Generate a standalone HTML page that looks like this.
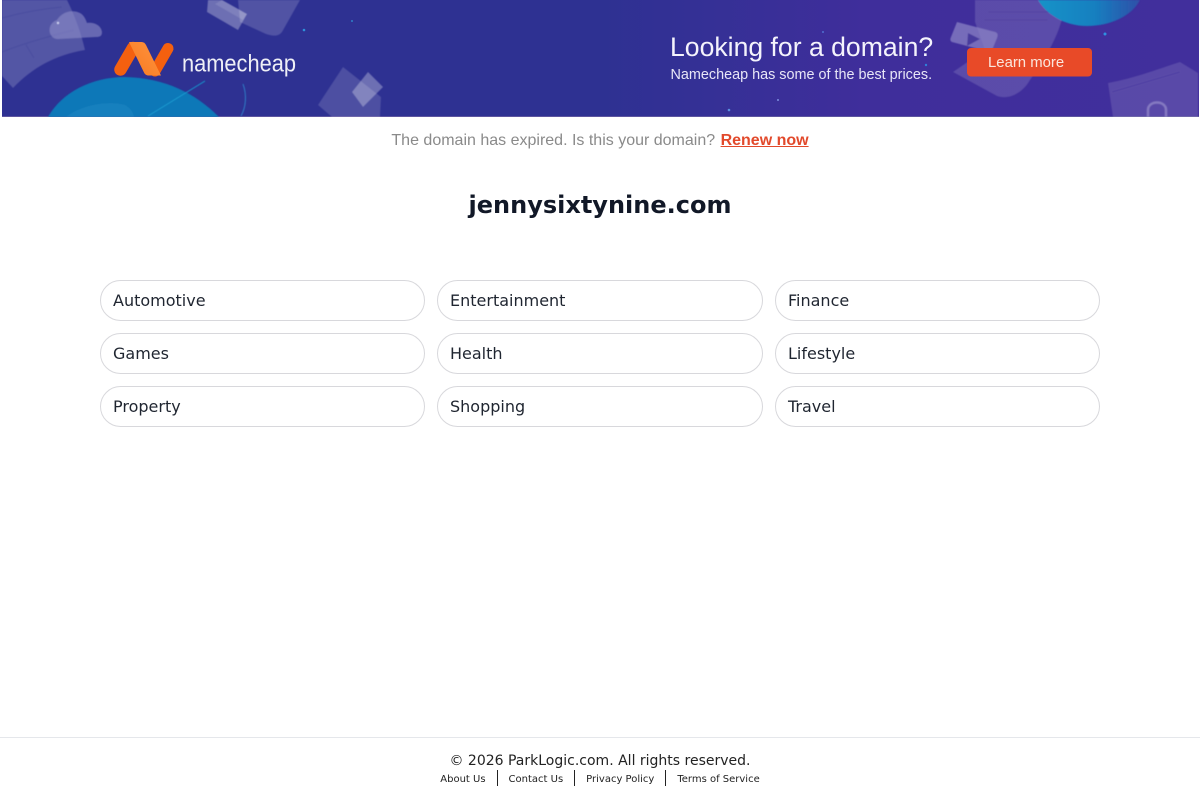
<!DOCTYPE html>
<html lang="en">
<head>
<meta charset="utf-8">
<title>jennysixtynine.com</title>
<style>
html,body{margin:0;padding:0;background:#fff}
body{width:1200px;height:800px;position:relative;overflow:hidden;font-family:"DejaVu Sans",sans-serif;color:#111827}
.banner{position:absolute;left:2px;top:0;width:1197px;height:117px;overflow:hidden}
.banner svg{position:absolute;left:-2px;top:0}
.notice{position:absolute;left:0;top:131px;width:1200px;text-align:center;font:16px/20px "Liberation Sans",sans-serif;color:#8a8a8a}
.notice a{color:#e2492b;font-weight:bold;text-decoration:underline;margin-left:1px}
h1{position:absolute;left:0;top:189px;width:1200px;margin:0;text-align:center;font:bold 24px/32px "DejaVu Sans",sans-serif;color:#111827}
.pill{position:absolute;box-sizing:border-box;height:41px;border:1px solid #d8d8dc;border-radius:20.5px;padding-left:12px;font-size:16px;line-height:39px;color:#1f2530;background:#fff}
.c1{left:100px;width:325px}.c2{left:437px;width:326px}.c3{left:775px;width:325px}
.r1{top:280px}.r2{top:333px}.r3{top:386px}
.footer{position:absolute;left:0;top:737px;width:1200px;height:63px;border-top:1px solid #e5e7eb}
.copy{position:absolute;left:0;top:14px;width:1200px;text-align:center;font-size:14px;line-height:18px;color:#222}
.links{position:absolute;left:0;top:32px;width:1200px;text-align:center;font-size:10px;color:#222;white-space:nowrap}
.links a{color:#222;text-decoration:none;display:inline-block;vertical-align:top;padding:0 11px;height:16px;line-height:19px}
.links a+a{border-left:1px solid #222}
</style>
</head>
<body>
<div class="banner">
<svg width="1200" height="117" viewBox="0 0 1200 117">
<defs>
<linearGradient id="bg" x1="0" y1="0" x2="1" y2="0">
<stop offset="0" stop-color="#2e3192"/>
<stop offset=".5" stop-color="#2e3192"/>
<stop offset=".72" stop-color="#3f2e9b"/>
<stop offset="1" stop-color="#412f9c"/>
</linearGradient>
<linearGradient id="orange" x1="0" y1="1" x2="1" y2="0">
<stop offset="0" stop-color="#f87a20"/>
<stop offset="1" stop-color="#ff9440"/>
</linearGradient>
<linearGradient id="globe" x1="0" y1="0" x2="1" y2="0">
<stop offset="0" stop-color="#1593c8"/>
<stop offset=".55" stop-color="#1680c0"/>
<stop offset="1" stop-color="#2f4fa8"/>
</linearGradient>
<filter id="soft"><feGaussianBlur stdDeviation=".5"/></filter>
</defs>
<rect width="1200" height="117" fill="url(#bg)"/>
<rect y="116" width="1200" height="1" fill="#5d559f"/>

<g filter="url(#soft)">
<!-- left fan -->
<path d="M2 0H67C75 16 81 33 85 50 55 55 32 68 13 88L2 76Z" fill="#fff" opacity=".18"/>
<path d="M2 18C20 13 40 9 62 7M2 52C22 44 42 38 74 30M26 45 34 58" stroke="#2e3192" stroke-opacity=".16" stroke-width="2" fill="none"/>
<!-- cloud -->
<path d="M58 39C48 39 46 24 57 20 62 12 72 9 80 13 84 15 86 20 87 23 92 22 101 24 102 32 102 36 100 37 96 37Z" fill="#8d8ec8" opacity=".6"/>
<circle cx="58" cy="23" r="1.2" fill="#cfd2f0"/>

<!-- top centre papers -->
<path d="M238 0H300L282 32C278 37 272 36 266 34L240 22Z" fill="#fff" opacity=".17"/>
<path d="M208 0 207 12 238 30 247 14 222 0Z" fill="#fff" opacity=".3"/>
<path d="M222 0 247 14 243 20 215 4Z" fill="#fff" opacity=".12"/>

<!-- globe -->
<path d="M48 117C62 92 92 77 125 77 165 78 195 93 219 117Z" fill="#0f78b8"/>
<path d="M66 117C80 106 106 100 125 105 130 108 133 112 134 117Z" fill="#1f86c2" opacity=".6"/>
<path d="M148 116 205 81" stroke="#1a9ad0" stroke-width="1" fill="none"/>
<path d="M243 84C247 95 246 107 241 116" stroke="#2f7fc8" stroke-width="1" fill="none"/>

<!-- lower doc cluster -->
<path d="M343 67 381 97 380 117H332L318 105Z" fill="#fff" opacity=".15"/>
<path d="M368 72 383 87 363 107 352 92Z" fill="#fff" opacity=".3"/>

<!-- right shapes -->
<path d="M975 0H1065C1064 26 1050 52 1030 80 1022 94 1008 100 997 96L953 72 985 50 975 22Z" fill="#fff" opacity=".14"/>
<path d="M988 12 1050 12M984 20 1048 20" stroke="#412f9c" stroke-opacity=".22" stroke-width="2"/>
<path d="M957 22 995 32C998 33 998 35 997 38L992 50C990 52 989 52 986 51L952 42C950 41 950 39 951 37Z" fill="#8a82c4" opacity=".75"/>
<path d="M968 33 980 39 967 46Z" fill="#3c3196" opacity=".8"/>
<path d="M1038 0H1140C1132 16 1110 26 1087 26 1064 26 1046 14 1038 0Z" fill="url(#globe)"/>
<path d="M1108 83C1135 78 1155 70 1180 62L1198 73V117H1113Z" fill="#fff" opacity=".13"/>
<path d="M1112 92 1180 72" stroke="#412f9c" stroke-opacity=".3" stroke-width="2"/>
<path d="M1148 117V110C1148 100 1166 100 1166 110V117" stroke="#a9a3d6" stroke-opacity=".55" stroke-width="2.5" fill="none"/>
</g>

<!-- Stars -->
<circle cx="304" cy="30" r="1.3" fill="#2f8fd8"/>
<circle cx="352" cy="21" r="1" fill="#2f7fc8"/>
<circle cx="729" cy="110" r="1.3" fill="#5a8fe0"/>
<circle cx="778" cy="100" r="1" fill="#7d90e0"/>
<circle cx="926" cy="65" r="1.2" fill="#2f7fd8"/>
<circle cx="1105" cy="34" r="1.5" fill="#2f8fe0"/>
<circle cx="823" cy="32" r="1" fill="#4f6fd0"/>

<!-- Logo -->
<path d="M120.500 69.500 133 48" stroke="#f4600f" stroke-width="12.500" stroke-linecap="round" fill="none"/>
<path d="M168 48.500 155 71" stroke="#f4600f" stroke-width="11" stroke-linecap="round" fill="none"/>
<path d="M129 42H141.500C143.500 42 145 43 146 45L161 75.500H149C146.500 75.500 145 74.500 144 72.500Z" fill="url(#orange)"/>
<text x="182" y="71.500" font-family="Liberation Sans, sans-serif" font-size="24" fill="#fff" fill-opacity=".92" textLength="114" lengthAdjust="spacingAndGlyphs">namecheap</text>

<!-- Headline -->
<text x="670" y="56" font-family="Liberation Sans, sans-serif" font-size="26.6" fill="#f4f3fc">Looking for a domain?</text>
<text x="670.5" y="79" font-family="Liberation Sans, sans-serif" font-size="14.4" fill="#e8e6f7">Namecheap has some of the best prices.</text>

<!-- Button -->
<rect x="967" y="48" width="125" height="28.500" rx="4" fill="#e84a28"/>
<text x="988" y="67" font-family="Liberation Sans, sans-serif" font-size="14.9" fill="#fbe6dc">Learn more</text>
</svg>
</div>

<div class="notice">The domain has expired. Is this your domain? <a>Renew now</a></div>
<h1>jennysixtynine.com</h1>

<div class="pill c1 r1">Automotive</div>
<div class="pill c2 r1">Entertainment</div>
<div class="pill c3 r1">Finance</div>
<div class="pill c1 r2">Games</div>
<div class="pill c2 r2">Health</div>
<div class="pill c3 r2">Lifestyle</div>
<div class="pill c1 r3">Property</div>
<div class="pill c2 r3">Shopping</div>
<div class="pill c3 r3">Travel</div>

<div class="footer">
<div class="copy">© 2026 ParkLogic.com. All rights reserved.</div>
<div class="links"><a>About Us</a><a>Contact Us</a><a>Privacy Policy</a><a>Terms of Service</a></div>
</div>
</body>
</html>
